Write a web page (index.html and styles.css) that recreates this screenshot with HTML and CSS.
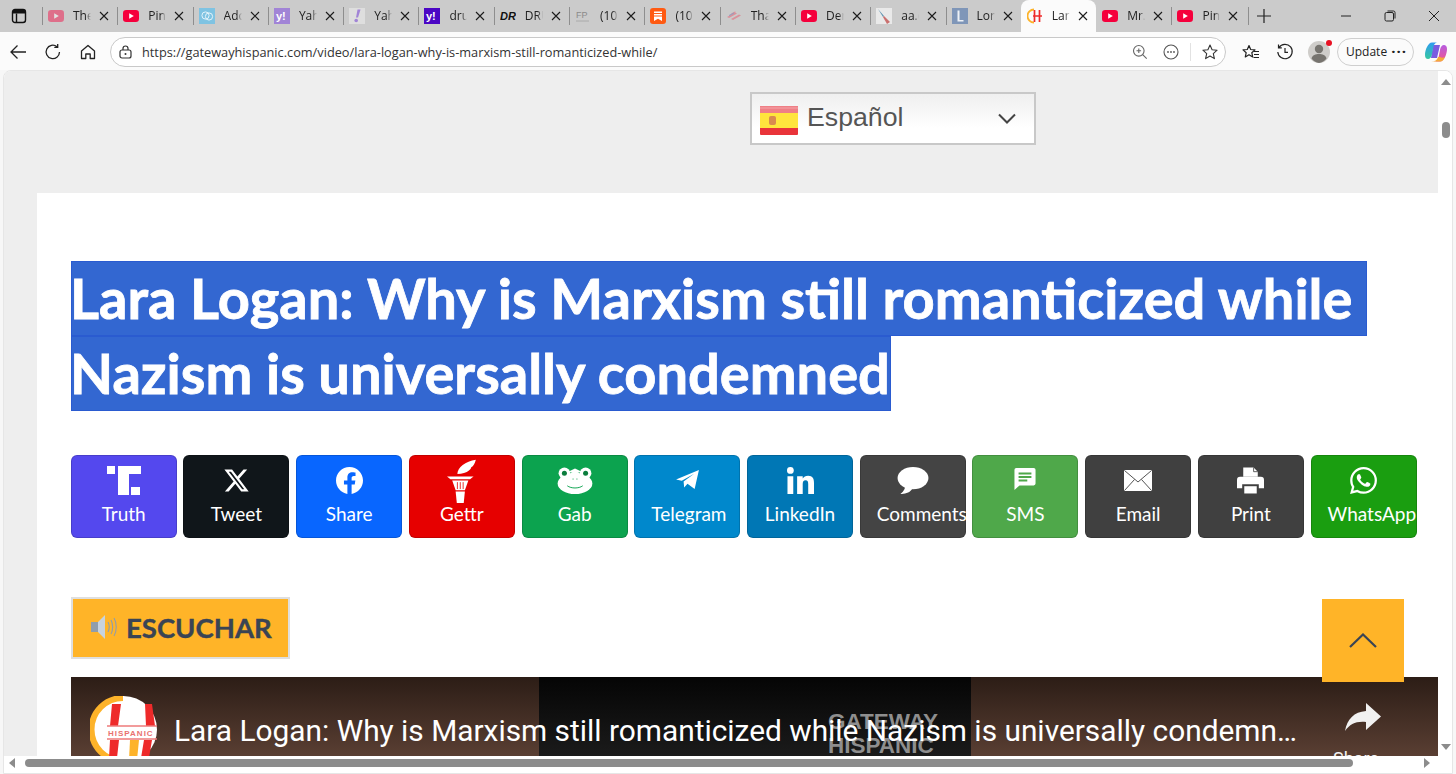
FILE: index.html
```html
<!DOCTYPE html>
<html lang="en">
<head>
    <meta charset="UTF-8">
    <meta name="viewport" content="width=device-width, initial-scale=1.0">
    <title>Lara Logan: Why is Marxism still romanticized while Nazism is universally condemned</title>
    <link rel="stylesheet" href="styles.css">
</head>
<body>
    <svg class="defs" width="0" height="0">
        <defs>
            <linearGradient id="cp-left" x1="0" y1="0" x2="0" y2="1"><stop offset="0" stop-color="#2f9bf0"/><stop offset="1" stop-color="#35c7a0"/></linearGradient>
            <linearGradient id="cp-right" x1="0" y1="0" x2="0" y2="1"><stop offset="0" stop-color="#b65be0"/><stop offset="1" stop-color="#f0568f"/></linearGradient>
        </defs>
        <symbol id="yt" viewBox="0 0 16 12">
            <rect width="16" height="12" rx="3.2" fill="#f5003c"/>
            <path d="M6.2 3.3 10.8 6 6.2 8.7z" fill="#fff"/>
        </symbol>
        <symbol id="close" viewBox="0 0 10 10">
            <path d="M1 1 9 9M9 1 1 9" stroke="#1c1c1c" stroke-width="1.1" fill="none"/>
        </symbol>
    </svg>

    <!-- Tabs -->
    <div class="tabstrip">
        <svg class="tab-actions" width="16" height="16" viewBox="0 0 16 16"><rect x="1.5" y="1.5" width="13" height="13" rx="2.5" fill="none" stroke="#111" stroke-width="1.4"/><path d="M5.5 5.5V14" stroke="#111" stroke-width="1.4" fill="none"/><rect x="2" y="2" width="12" height="3.5" fill="#111"/></svg>
        <div class="tabs">
            <div class="tab"><svg class="favicon faded" viewBox="0 0 16 16"><use href="#yt" y="2" width="16" height="12"/></svg><span class="tab-title">The</span><svg class="tab-close"><use href="#close"/></svg></div>
            <div class="tab"><svg class="favicon" viewBox="0 0 16 16"><use href="#yt" y="2" width="16" height="12"/></svg><span class="tab-title">Pink</span><svg class="tab-close"><use href="#close"/></svg></div>
            <div class="tab"><svg class="favicon" viewBox="0 0 16 16"><rect width="16" height="16" fill="#7fc3e2"/><circle cx="6.5" cy="7.5" r="3.6" fill="none" stroke="#e4f4fb" stroke-width="1"/><circle cx="10" cy="8.5" r="3.6" fill="none" stroke="#e4f4fb" stroke-width="1"/></svg><span class="tab-title">Adc</span><svg class="tab-close"><use href="#close"/></svg></div>
            <div class="tab"><svg class="favicon" viewBox="0 0 16 16"><rect width="16" height="16" fill="#a184d6"/><text x="2" y="12" class="favicon-text" fill="#fff">y!</text></svg><span class="tab-title">Yah</span><svg class="tab-close"><use href="#close"/></svg></div>
            <div class="tab"><svg class="favicon" viewBox="0 0 16 16"><rect width="16" height="16" fill="#dedede"/><path d="M8.5 1.5h3L9 9.5H7z" fill="#a184d6"/><circle cx="7.2" cy="12.5" r="1.8" fill="#a184d6"/></svg><span class="tab-title">Yah</span><svg class="tab-close"><use href="#close"/></svg></div>
            <div class="tab"><svg class="favicon" viewBox="0 0 16 16"><rect width="16" height="16" fill="#4b06c4"/><text x="2" y="12" class="favicon-text" fill="#fff">y!</text></svg><span class="tab-title">dru</span><svg class="tab-close"><use href="#close"/></svg></div>
            <div class="tab"><svg class="favicon" viewBox="0 0 16 16"><text x="0" y="12" class="favicon-text favicon-dr" fill="#111">DR</text></svg><span class="tab-title">DRU</span><svg class="tab-close"><use href="#close"/></svg></div>
            <div class="tab"><svg class="favicon" viewBox="0 0 16 16"><text x="1" y="10" class="favicon-text favicon-fp" fill="#8a8a8a">FP</text><path d="M1 13h13" stroke="#aaa"/></svg><span class="tab-title">(10</span><svg class="tab-close"><use href="#close"/></svg></div>
            <div class="tab"><svg class="favicon" viewBox="0 0 16 16"><rect width="16" height="16" rx="3" fill="#ff5a12"/><path d="M4 3.5h8v1.4H4zM4 6h8v1.4H4zM4 8.6h8V13L8 10.8 4 13z" fill="#fff"/></svg><span class="tab-title">(10</span><svg class="tab-close"><use href="#close"/></svg></div>
            <div class="tab"><svg class="favicon" viewBox="0 0 16 16"><path d="M1 9 9 4.5l2 1L3 10zM5 11l8-4.500 2 1L7 12zM5 5.500 9 3.500l1 .5-4 2z" fill="#d9919b"/><path d="M3 7.500 8 5" stroke="#8e9bc0"/></svg><span class="tab-title">Tha</span><svg class="tab-close"><use href="#close"/></svg></div>
            <div class="tab"><svg class="favicon" viewBox="0 0 16 16"><use href="#yt" y="2" width="16" height="12"/></svg><span class="tab-title">Der</span><svg class="tab-close"><use href="#close"/></svg></div>
            <div class="tab"><svg class="favicon" viewBox="0 0 16 16"><rect width="16" height="16" fill="#e9e9e9"/><path d="M2 1 8 8 7 9z" fill="#5d93b0"/><path d="M8 8l6 6-3 2-4-7z" fill="#c9706f"/></svg><span class="tab-title">aa.c</span><svg class="tab-close"><use href="#close"/></svg></div>
            <div class="tab"><svg class="favicon" viewBox="0 0 16 16"><rect width="16" height="16" fill="#7f96b8"/><path d="M5.500 2.500h2V12h4v1.500h-6z" fill="#eef1f6"/></svg><span class="tab-title">Lon</span><svg class="tab-close"><use href="#close"/></svg></div>
            <div class="tab tab-active"><svg class="favicon" viewBox="0 0 16 16"><path d="M7 1.500A6.500 6.500 0 0 0 7 14.500" fill="none" stroke="#fdb32a" stroke-width="1.800"/><path d="M7.500 2v12M12.500 2v12M6 8h9" stroke="#ee2a2a" stroke-width="1.700" fill="none"/></svg><span class="tab-title">Lara</span><svg class="tab-close"><use href="#close"/></svg></div>
            <div class="tab tab-after"><svg class="favicon" viewBox="0 0 16 16"><use href="#yt" y="2" width="16" height="12"/></svg><span class="tab-title">Mr.</span><svg class="tab-close"><use href="#close"/></svg></div>
            <div class="tab"><svg class="favicon" viewBox="0 0 16 16"><use href="#yt" y="2" width="16" height="12"/></svg><span class="tab-title">Pink</span><svg class="tab-close"><use href="#close"/></svg></div>
            <div class="tab-new"><svg width="14" height="14" viewBox="0 0 14 14"><path d="M7 0v14M0 7h14" stroke="#222" stroke-width="1.200"/></svg></div>
        </div>
        <div class="window-controls">
            <svg width="12" height="12" viewBox="0 0 12 12"><path d="M1 6h10" stroke="#222"/></svg>
            <svg width="12" height="12" viewBox="0 0 12 12"><rect x="1" y="2.500" width="8.500" height="8.500" rx="1.500" fill="none" stroke="#222"/><path d="M3.500 1h6a1.500 1.500 0 0 1 1.500 1.500v6" fill="none" stroke="#222"/></svg>
            <svg width="12" height="12" viewBox="0 0 12 12"><path d="M1 1l10 10M11 1 1 11" stroke="#222"/></svg>
        </div>
    </div>

    <!-- Barra de endereco -->
    <div class="toolbar">
        <svg class="tool-icon" viewBox="0 0 18 18"><path d="M17 9H2M8.500 2.500 2 9l6.500 6.500" fill="none" stroke="#222" stroke-width="1.300"/></svg>
        <svg class="tool-icon" viewBox="0 0 18 18"><path d="M15.500 9A6.700 6.700 0 1 1 13 3.700M13.700 1v3.400h-3.400" fill="none" stroke="#222" stroke-width="1.300"/></svg>
        <svg class="tool-icon" viewBox="0 0 18 18"><path d="M2.500 8 9 2.500 15.500 8v7.500h-4.300V11H6.800v4.500H2.500z" fill="none" stroke="#222" stroke-width="1.300" stroke-linejoin="round"/></svg>
        <div class="address">
            <svg class="lock" width="13" height="14" viewBox="0 0 13 14"><rect x="1" y="5" width="11" height="8" rx="2" fill="none" stroke="#333" stroke-width="1.200"/><path d="M4 5V3.500a2.500 2.500 0 0 1 5 0V5" fill="none" stroke="#333" stroke-width="1.200"/><circle cx="6.500" cy="9" r="1" fill="#333"/></svg>
            <span class="url">https://gatewayhispanic.com/video/lara-logan-why-is-marxism-still-romanticized-while/</span>
            <svg class="addr-icon" viewBox="0 0 16 16"><circle cx="6.800" cy="6.800" r="5.300" fill="none" stroke="#666" stroke-width="1.100"/><path d="M4.500 6.800h4.600M6.800 4.500v4.600M10.700 10.700l4 4" stroke="#666" stroke-width="1.100"/></svg>
            <svg class="addr-icon" viewBox="0 0 16 16"><circle cx="8" cy="8" r="7" fill="none" stroke="#555" stroke-width="1.100"/><circle cx="5" cy="8" r=".9" fill="#555"/><circle cx="8" cy="8" r=".9" fill="#555"/><circle cx="11" cy="8" r=".9" fill="#555"/></svg>
            <span class="addr-divider"></span>
            <svg class="addr-icon" viewBox="0 0 16 16"><path d="M8 1l2.100 4.700 5 .5-3.800 3.400 1.100 5L8 12l-4.400 2.600 1.100-5L.9 6.200l5-.5z" fill="none" stroke="#333" stroke-width="1.100" stroke-linejoin="round"/></svg>
        </div>
        <svg class="tool-icon tool-fav" viewBox="0 0 18 18"><path d="M7 2.500 8.700 6.500l4.300.4-3.200 2.800.9 4.200L7 11.700l-3.700 2.200.9-4.200L1 6.900l4.300-.4z" fill="none" stroke="#222" stroke-width="1.200" stroke-linejoin="round"/><path d="M12 8.500h5M12 11.500h5M11.500 14.500h5.500" stroke="#222" stroke-width="1.200"/></svg>
        <svg class="tool-icon tool-hist" viewBox="0 0 18 18"><path d="M3 4.500A7.200 7.200 0 1 1 1.800 9M2.500 1.500v3.300h3.300M9 5v4.300h3" fill="none" stroke="#222" stroke-width="1.200"/></svg>
        <div class="profile">
            <svg width="22" height="22" viewBox="0 0 22 22"><circle cx="11" cy="11" r="11" fill="#cfcdca"/><circle cx="11" cy="8" r="4.200" fill="#77746f"/><path d="M3.500 17.500c1-3.500 4-4.500 7.500-4.500s6.500 1 7.500 4.500A11 11 0 0 1 11 22a11 11 0 0 1-7.500-4.500z" fill="#77746f"/></svg>
            <span class="profile-dot"></span>
        </div>
        <div class="update"><span>Update</span><span class="update-dots">&middot;&middot;&middot;</span></div>
        <svg class="copilot" width="22" height="22" viewBox="0 0 22 22"><path d="M8 4h7l-3 13H6z" fill="#7a5be0"/><path d="M7 1.500h5C10 2 9 3.500 8.500 5.500L6.800 14C6.300 16 5 18 3 18c-1.500 0-3-1-3-4C0 9 3 1.500 7 1.500z" fill="url(#cp-left)"/><path d="M15 20.500h-5c2-.5 3-2 3.500-4L15.200 8c.5-2 1.800-4 3.800-4 1.500 0 3 1 3 4 0 5-3 12.500-7 12.500z" fill="url(#cp-right)"/><path d="M6 20.500h9c2.500 0 4-2 5-4.500-1.500 1-3.500 1-5 0h-2c-.7 3-3 4.500-7 4.500z" fill="#f5a93a"/></svg>
    </div>

    <!-- Area da pagina -->
    <div class="frame">
        <div class="frame-row">
            <div class="viewport">
                <div class="lang-wrap">
                    <div class="lang">
                        <svg class="flag" width="38" height="29" viewBox="0 0 38 29"><rect width="38" height="29" rx="1" fill="#e9343a"/><rect y="7" width="38" height="15" fill="#ffe53d"/><rect width="38" height="7" fill="#ef7f86"/><rect y="1.500" width="38" height="1" fill="#f5a5a9"/><rect x="9" y="10" width="7" height="9" rx="2" fill="#d98a4f"/></svg>
                        <span class="lang-name">Español</span>
                        <svg class="lang-arrow" width="18" height="11" viewBox="0 0 18 11"><path d="M1 1.500 9 9.500l8-8" fill="none" stroke="#444" stroke-width="2"/></svg>
                    </div>
                </div>

                <div class="article">
                    <h1 class="post-title">
                        <span class="title-line first">Lara Logan: Why is Marxism still romanticized while</span>
                        <span class="title-line">Nazism is universally condemned</span>
                    </h1>

                    <div class="share-row">
                        <a class="share truth"><svg class="share-icon wide" viewBox="0 0 34 29"><path d="M0 0h8v8H0zM11 0h23v8H22v21H11zM24 21h9v8h-9z" fill="#fff"/></svg>Truth</a>
                        <a class="share tweet"><svg class="share-icon" viewBox="0 0 24 24"><path d="M18.244 2.250h3.308l-7.227 8.260 8.502 11.240H16.170l-5.214-6.817L4.990 21.750H1.680l7.730-8.835L1.254 2.250H8.080l4.713 6.231zm-1.161 17.520h1.833L7.084 4.126H5.117z" fill="#fff"/></svg>Tweet</a>
                        <a class="share fb"><svg class="share-icon" viewBox="0 0 24 24"><path d="M24 12.073C24 5.405 18.627 0 12 0S0 5.405 0 12.073c0 6.026 4.388 11.020 10.125 11.927v-8.437H7.078v-3.490h3.047V9.413c0-3.026 1.792-4.697 4.533-4.697 1.312 0 2.686.235 2.686.235v2.971h-1.513c-1.491 0-1.956.930-1.956 1.886v2.262h3.328l-.532 3.490h-2.796V24C19.612 23.093 24 18.099 24 12.073z" fill="#fff"/></svg>Share</a>
                        <a class="share gettr"><svg class="share-icon tall" viewBox="0 0 26 38"><path d="M9 13C9 7 16 2 25 .500 24 4 23 6 21 7c0 1-1 2-2 3-2 2-6 3-10 3z" fill="#fff"/><path d="M0 15h23l-3 2.500H3z" fill="#fff"/><path d="M4.500 18.500h14l-3 8.500H7.500z" fill="#fff"/><path d="M7.500 28h8l-1 10H8.500z" fill="#fff"/><path d="M9 20v6M11.500 20v6M14 20v6" stroke="#e60000" stroke-width=".7"/></svg>Gettr</a>
                        <a class="share gab"><svg class="share-icon frog" viewBox="0 0 36 28"><circle cx="7" cy="6.500" r="6" fill="#fff"/><circle cx="29" cy="6.500" r="6" fill="#fff"/><ellipse cx="18" cy="17" rx="18" ry="11" fill="#fff"/><path d="M11 5 18 1.500 25 5 18 7z" fill="#fff"/><circle cx="7" cy="6.500" r="2.600" fill="#0b7d3d"/><circle cx="29" cy="6.500" r="2.600" fill="#0b7d3d"/><path d="M10 19.500c4 3 12 3 16 0" fill="none" stroke="#0ca34f" stroke-width="1"/><path d="M15.500 12.500h1M19.500 12.500h1" stroke="#0ca34f"/></svg>Gab</a>
                        <a class="share telegram"><svg class="share-icon plane" viewBox="0 0 24 21"><path d="M0 10 24 0l-4.500 20-7.500-5.500-3.500 4-.6-6.500L19 4 6 11.300z" fill="#fff"/></svg>Telegram</a>
                        <a class="share linkedin"><svg class="share-icon" viewBox="0 0 28 28"><circle cx="3.500" cy="3.500" r="3.500" fill="#fff"/><path d="M.500 9.500h6V28h-6zM10.500 9.500h5.800V12c1-1.800 3-3 5.600-3 4.800 0 6.100 3 6.100 7.500V28h-6V17.800c0-2.500-.5-4-2.700-4-2.300 0-3 1.700-3 4V28h-5.800z" fill="#fff"/></svg>LinkedIn</a>
                        <a class="share comments"><svg class="share-icon bubble" viewBox="0 0 32 28"><ellipse cx="16" cy="11.500" rx="16" ry="11.500" fill="#fff"/><path d="M8 19c0 3-1 6-5 9 4 0 9-1 12-5z" fill="#fff"/></svg>Comments</a>
                        <a class="share sms"><svg class="share-icon note" viewBox="0 0 24 24"><path d="M2.500 0h19A2 2 0 0 1 23.500 2v15a2 2 0 0 1-2 2H6l-5.500 5V2a2 2 0 0 1 2-2z" fill="#fff"/><path d="M5 5h14v2.200H5zM5 8.700h14v2.200H5zM5 12.500h9.500v2.200H5z" fill="#4fa84a"/></svg>SMS</a>
                        <a class="share email"><svg class="share-icon mail" viewBox="0 0 28 21"><rect width="28" height="21" rx="1" fill="#fff"/><path d="M.500.500 14 12 27.500.500M.500 20.500 10.500 9.500M27.500 20.500 17.500 9.500" fill="none" stroke="#3f3f3f" stroke-width=".9"/></svg>Email</a>
                        <a class="share print"><svg class="share-icon" viewBox="0 0 26 25"><path d="M6 0h10l4 4v5H6z" fill="#fff"/><path d="M3 9h20a3 3 0 0 1 3 3v8h-5v-4H5v4H0v-8a3 3 0 0 1 3-3z" fill="#fff"/><path d="M7 18h12v7H7z" fill="#fff"/><path d="M16 0v4h4" fill="none" stroke="#3f3f3f" stroke-width=".8"/></svg>Print</a>
                        <a class="share whatsapp"><svg class="share-icon" viewBox="0 0 24 24"><path d="M17.472 14.382c-.297-.149-1.758-.867-2.030-.967-.273-.099-.471-.148-.670.150-.197.297-.767.966-.940 1.164-.173.199-.347.223-.644.075-.297-.150-1.255-.463-2.390-1.475-.883-.788-1.480-1.761-1.653-2.059-.173-.297-.018-.458.130-.606.134-.133.298-.347.446-.520.149-.174.198-.298.298-.497.099-.198.050-.371-.025-.520-.075-.149-.669-1.612-.916-2.207-.242-.579-.487-.500-.669-.510-.173-.008-.371-.010-.570-.010-.198 0-.520.074-.792.372-.272.297-1.040 1.016-1.040 2.479 0 1.462 1.065 2.875 1.213 3.074.149.198 2.096 3.200 5.077 4.487.709.306 1.262.489 1.694.625.712.227 1.360.195 1.871.118.571-.085 1.758-.719 2.006-1.413.248-.694.248-1.289.173-1.413-.074-.124-.272-.198-.570-.347m-5.421 7.403h-.004a9.870 9.870 0 01-5.031-1.378l-.361-.214-3.741.982.998-3.648-.235-.374a9.860 9.860 0 01-1.510-5.260c.001-5.450 4.436-9.884 9.888-9.884 2.640 0 5.122 1.030 6.988 2.898a9.825 9.825 0 012.893 6.994c-.003 5.450-4.437 9.884-9.885 9.884m8.413-18.297A11.815 11.815 0 0012.050 0C5.495 0 .160 5.335.157 11.892c0 2.096.547 4.142 1.588 5.945L.057 24l6.305-1.654a11.882 11.882 0 005.683 1.448h.005c6.554 0 11.890-5.335 11.893-11.893a11.821 11.821 0 00-3.480-8.413z" fill="#fff"/></svg>WhatsApp</a>
                    </div>

                    <a class="listen">
                        <svg width="28" height="26" viewBox="0 0 28 26"><path d="M1 8h7v10H1z" fill="#8f9dab"/><path d="M8 8l7-7v24l-7-7z" fill="#c8d3de"/><path d="M18 8c1.500 3 1.500 7 0 10M21 6c2.200 4 2.200 10 0 14M24 4c3 5 3 13 0 18" fill="none" stroke="#8f9dab" stroke-width="1.100"/></svg>
                        <span>ESCUCHAR</span>
                    </a>

                    <div class="video">
                        <div class="video-thumb">
                            <span class="thumb-text">GATEWAY<br>HISPANIC</span>
                        </div>
                        <div class="video-head">
                            <div class="channel-logo">
                                <svg width="67" height="67" viewBox="0 0 67 67"><circle cx="33.500" cy="33.500" r="33.500" fill="#fff"/><path d="M33 2A31.500 31.500 0 0 0 33 65" fill="none" stroke="#fdb32a" stroke-width="6"/><path d="M22 8h9l-3 22h-8zM55 8h7l3 22h-9zM20 44h9l-2 18h-8zM54 44h8l-3 18h-8z" fill="#ee2a2a"/><path d="M40 44h9l-2 20h-8z" fill="#fdb32a"/><path d="M17 30h50M17 43h50" stroke="#ee7b7b" stroke-width="1.500"/><text x="18" y="40" class="channel-text">HISPANIC</text></svg>
                            </div>
                            <div class="video-title">Lara Logan: Why is Marxism still romanticized while Nazism is universally condemn…</div>
                            <div class="video-share">
                                <svg width="36" height="28" viewBox="0 0 36 28"><path d="M21 0l15 13.500L21 27V19C11 18 5 21 0 28 2 16 9 9 21 8z" fill="#f1f1f1"/></svg>
                                <span>Share</span>
                            </div>
                        </div>
                    </div>
                </div>
            </div>

            <div class="vscroll">
                <span class="arrow-up"></span>
                <span class="vthumb"></span>
                <span class="arrow-down"></span>
            </div>
        </div>

        <div class="hscroll">
            <span class="arrow-left"></span>
            <span class="hthumb"></span>
            <span class="arrow-right"></span>
        </div>

        <a class="to-top"><svg width="28" height="15" viewBox="0 0 28 15"><path d="M1 14 14 1.500 27 14" fill="none" stroke="#3a4454" stroke-width="2.200"/></svg></a>
    </div>
</body>
</html>
```

FILE: styles.css
```css
* {
    margin: 0;
    padding: 0;
    box-sizing: border-box;
}

body, html {
    height: 100%;
    width: 100%;
    overflow: hidden;
    background: #f7f7f7;
    font-family: "Open Sans", sans-serif;
}

body {
    display: flex;
    flex-direction: column;
}

.defs {
    position: absolute;
}

/* Abas */
.tabstrip {
    display: flex;
    align-items: center;
    height: 32px;
    background: #cbcbcb;
    flex-shrink: 0;
}

.tab-actions {
    margin-left: 11px;
    margin-right: 15px;
    flex-shrink: 0;
}

.tabs {
    display: flex;
    align-items: stretch;
    height: 32px;
}

.tab {
    display: flex;
    align-items: center;
    width: 75.3px;
    height: 32px;
    padding-left: 6px;
    position: relative;
}

.tab::before {
    content: "";
    position: absolute;
    left: 0;
    top: 7px;
    height: 18px;
    border-left: 1px solid #8e8e8e;
}

.tab-active {
    background: #fbfbfb;
    border-radius: 8px 8px 0 0;
}

.tab-active::before, .tab-after::before {
    display: none;
}

.favicon {
    width: 16px;
    height: 16px;
    flex-shrink: 0;
}

.faded {
    opacity: 0.45;
}

.favicon-text {
    font-family: "Liberation Sans", sans-serif;
    font-size: 11px;
    font-weight: bold;
}

.favicon-dr {
    font-style: italic;
}

.favicon-fp {
    font-size: 9px;
    font-weight: normal;
}

.tab-title {
    width: 18px;
    margin-left: 9px;
    font-size: 12px;
    line-height: 32px;
    color: #222;
    overflow: hidden;
    white-space: nowrap;
    flex-shrink: 0;
    -webkit-mask-image: linear-gradient(90deg, #000 70%, transparent);
    mask-image: linear-gradient(90deg, #000 70%, transparent);
}

.tab-close {
    width: 10px;
    height: 10px;
    margin-left: 8px;
    flex-shrink: 0;
}

.tab-new {
    display: flex;
    align-items: center;
    justify-content: center;
    width: 34px;
    border-left: 1px solid transparent;
    position: relative;
}

.tab-new::before {
    content: "";
    position: absolute;
    left: 0;
    top: 7px;
    height: 18px;
    border-left: 1px solid #8e8e8e;
}

.window-controls {
    display: flex;
    align-items: center;
    gap: 32px;
    margin-left: auto;
    margin-right: 16px;
}

/* Barra de endereco */
.toolbar {
    display: flex;
    align-items: center;
    height: 38px;
    background: #fbfbfb;
    padding-left: 9px;
    padding-top: 1px;
    flex-shrink: 0;
}

.tool-icon {
    width: 18px;
    height: 18px;
    margin-right: 17px;
    flex-shrink: 0;
}

.address {
    display: flex;
    align-items: center;
    width: 1116px;
    height: 30px;
    margin-left: -4px;
    padding-left: 8px;
    padding-right: 7px;
    background: #fff;
    border: 1px solid #c9c9c9;
    border-radius: 15px;
    flex-shrink: 0;
}

.lock {
    margin-right: 10px;
    flex-shrink: 0;
}

.url {
    flex: 1;
    font-size: 12.75px;
    color: #333;
    white-space: nowrap;
}

.addr-icon {
    width: 16px;
    height: 16px;
    margin-left: 15px;
    flex-shrink: 0;
}

.addr-divider {
    height: 18px;
    border-left: 1px solid #e2e2e2;
    margin-left: 11px;
    margin-right: -4px;
}

.tool-fav {
    margin-left: 16px;
    margin-right: 16px;
}

.tool-hist {
    margin-right: 14px;
}

.profile {
    position: relative;
    width: 22px;
    height: 22px;
    flex-shrink: 0;
}

.profile-dot {
    position: absolute;
    top: -1px;
    right: -2px;
    width: 6px;
    height: 6px;
    border-radius: 50%;
    background: #e81123;
}

.update {
    display: flex;
    align-items: center;
    justify-content: space-between;
    width: 77px;
    height: 28px;
    margin-left: 7px;
    padding: 0 6px 0 8px;
    border: 1px solid #cfcfcf;
    border-radius: 14px;
    font-size: 12px;
    color: #222;
    flex-shrink: 0;
}

.update-dots {
    font-size: 15px;
    font-weight: bold;
    line-height: 1;
    letter-spacing: 1px;
}

.copilot {
    margin-left: 11px;
    flex-shrink: 0;
}

/* Area da pagina */
.frame {
    flex: 1;
    display: flex;
    flex-direction: column;
    margin: 0 3px;
    background: #fff;
    border: 1px solid #e6e6e6;
    border-radius: 8px 8px 0 0;
    overflow: hidden;
    min-height: 0;
}

.frame-row {
    flex: 1;
    display: flex;
    min-height: 0;
}

.viewport {
    width: 1434px;
    background: #eeeeee;
    overflow: hidden;
    flex-shrink: 0;
}

.lang-wrap {
    padding: 21px 0 48px 746px;
}

.lang {
    display: flex;
    align-items: center;
    width: 286px;
    height: 53px;
    padding-left: 8px;
    padding-right: 18px;
    background: linear-gradient(#efefef, #fff 70%);
    border: 2px solid #c8c8c8;
}

.flag {
    flex-shrink: 0;
    margin-top: 3px;
}

.lang-name {
    flex: 1;
    margin-left: 9px;
    margin-bottom: 3px;
    font-family: "Liberation Sans", sans-serif;
    font-size: 26.7px;
    color: #555;
}

.article {
    margin-left: 33px;
    padding: 68px 0 0 34px;
    background: #fff;
}

.post-title {
    font-family: Lato, sans-serif;
    font-weight: 700;
    font-size: 56px;
    -webkit-text-stroke: 0.8px #fff;
}

.title-line {
    display: block;
    width: fit-content;
    height: 75px;
    line-height: 72px;
    text-indent: -2px;
    color: #fff;
    background: #3367d1;
    border: 1px solid #2a5bd0;
    white-space: nowrap;
}

.title-line.first {
    padding-right: 14px;
}

.share-row {
    display: grid;
    grid-template-columns: repeat(12, 106px);
    column-gap: 6.73px;
    margin-top: 44px;
    margin-left: -0.3px;
}

/* o texto centralizado estoura para a direita em Comments e WhatsApp */
.share {
    display: block;
    height: 83px;
    padding: 11px 16px 0;
    border-radius: 6px;
    border: 1px solid rgba(0, 0, 0, 0.15);
    color: #fff;
    font-family: Lato, sans-serif;
    font-size: 19px;
    line-height: 24px;
    text-align: center;
    white-space: nowrap;
}

.share-icon {
    display: block;
    width: 27px;
    height: 27px;
    margin: 0 auto 8px;
}

.share-icon.wide {
    width: 34px;
    height: 29px;
    margin-top: -1px;
    margin-bottom: 7px;
}

.share-icon.tall {
    width: 30px;
    height: 44px;
    margin-top: -8px;
    margin-bottom: -1px;
}

.share-icon.frog {
    width: 36px;
    height: 27px;
}

.share-icon.plane {
    width: 23px;
    height: 20px;
    margin-top: 3px;
    margin-bottom: 12px;
}

.share-icon.bubble {
    width: 32px;
}

.share-icon.note {
    width: 22px;
    height: 22px;
    margin-top: 1px;
    margin-bottom: 12px;
}

.share-icon.mail {
    width: 28px;
}

.truth { background: #5448ee; }
.tweet { background: #10161a; }
.fb { background: #0866ff; }
.gettr { background: #e60000; }
.gab { background: #0ca34f; }
.telegram { background: #0088cc; }
.linkedin { background: #0077b5; }
.comments { background: #444444; }
.sms { background: #4fa84a; }
.email { background: #404040; }
.print { background: #404040; }
.whatsapp { background: #1a9e10; }

.listen {
    display: flex;
    align-items: center;
    gap: 8px;
    width: 219px;
    height: 62px;
    margin-top: 59px;
    padding-left: 17px;
    padding-bottom: 2px;
    background: #ffb428;
    border: 2px solid #dfdfdf;
    color: #3a4454;
    font-family: Lato, sans-serif;
    font-weight: 700;
    font-size: 27.5px;
    -webkit-text-stroke: 0.4px #3a4454;
}

.video {
    position: relative;
    height: 300px;
    margin-top: 18px;
    background: linear-gradient(#2c1d16, #5a3f33 80px);
    overflow: hidden;
}

.video-thumb {
    position: absolute;
    top: 0;
    left: 468px;
    width: 432px;
    height: 100%;
    background: linear-gradient(#050505, #1b1b1b 80px);
}

.thumb-text {
    display: block;
    padding: 33px 0 0 289px;
    font-family: "Liberation Sans", sans-serif;
    font-weight: bold;
    font-size: 22.5px;
    line-height: 24px;
    color: #8e8e8e;
    white-space: nowrap;
}

.video-head {
    position: relative;
    display: flex;
    padding: 19px 0 0 19px;
}

.channel-logo {
    width: 67px;
    height: 67px;
    flex-shrink: 0;
}

.channel-text {
    font-family: "Liberation Sans", sans-serif;
    font-size: 8px;
    font-weight: bold;
    letter-spacing: 1px;
    fill: #e9726f;
}

.video-title {
    width: 1122px;
    margin-left: 17px;
    font-family: Roboto, sans-serif;
    font-size: 29.85px;
    line-height: 70px;
    color: #fff;
    white-space: nowrap;
}

.video-share {
    display: flex;
    flex-direction: column;
    align-items: flex-start;
    width: 60px;
    margin-left: 37px;
    padding-top: 7px;
    font-family: Roboto, sans-serif;
    font-size: 18px;
    color: #f1f1f1;
}

.video-share svg {
    margin-left: 12px;
}

.video-share span {
    margin-top: 17px;
}

/* Barras de rolagem */
.vscroll {
    position: relative;
    flex: 1;
    background: #fff;
}

.vthumb {
    position: absolute;
    top: 51px;
    left: 4px;
    width: 8px;
    height: 16px;
    border-radius: 4px;
    background: #8c8c8c;
}

.arrow-up, .arrow-down {
    position: absolute;
    left: 3px;
    width: 0;
    height: 0;
    border-left: 5px solid transparent;
    border-right: 5px solid transparent;
}

.arrow-up {
    top: 8px;
    border-bottom: 6px solid #8c8c8c;
}

.arrow-down {
    bottom: 6px;
    border-top: 6px solid #8c8c8c;
}

.hscroll {
    position: relative;
    height: 17px;
    background: #fff;
    flex-shrink: 0;
}

.hthumb {
    position: absolute;
    top: 3px;
    left: 21px;
    width: 1328px;
    height: 8px;
    border-radius: 4px;
    background: #8c8c8c;
}

.arrow-left, .arrow-right {
    position: absolute;
    top: 2px;
    width: 0;
    height: 0;
    border-top: 5px solid transparent;
    border-bottom: 5px solid transparent;
}

.arrow-left {
    left: 5px;
    border-right: 6px solid #8c8c8c;
}

.arrow-right {
    left: 1420px;
    border-left: 6px solid #8c8c8c;
}

.to-top {
    position: absolute;
    left: 1322px;
    top: 599px;
    width: 82px;
    height: 83px;
    display: flex;
    align-items: center;
    justify-content: center;
    background: #ffb428;
}
```
